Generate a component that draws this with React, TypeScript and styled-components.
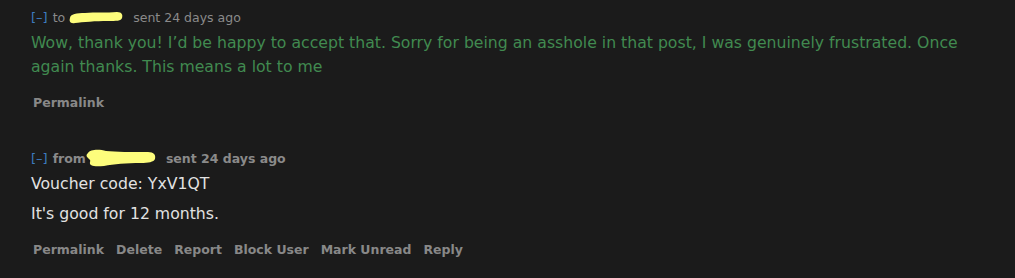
import React from "react";
import styled, { createGlobalStyle } from "styled-components";

const Global = createGlobalStyle`
  html, body { margin: 0; padding: 0; background: #1b1b1b; }
  body { font-family: "DejaVu Sans", Verdana, sans-serif; }
`;

const Page = styled.div`
  width: 1015px;
  height: 278px;
  background: #1b1b1b;
  overflow: hidden;
  padding-top: 7px;
  box-sizing: border-box;
`;

const Message = styled.div<{ $gap?: number }>`
  padding-left: 31px;
  margin-top: ${(p) => p.$gap ?? 0}px;
`;

const Header = styled.div<{ $bold?: boolean }>`
  display: flex;
  align-items: center;
  height: 20px;
  font-size: 12.5px;
  color: #8a8a8a;
  font-weight: ${(p) => (p.$bold ? 700 : 400)};
  white-space: nowrap;
`;

const Toggle = styled.span`
  color: #3d7cc0;
  font-weight: 400;
  font-size: 13px;
  margin-right: 5px;
`;

const Sent = styled.span`
  margin-left: 10px;
`;

const ScribbleBox = styled.span<{ $ml: number }>`
  display: inline-flex;
  margin-left: ${(p) => p.$ml}px;
`;

const Body = styled.div<{ $color: string }>`
  margin-top: 4px;
  font-size: 15.7px;
  line-height: 24px;
  color: ${(p) => p.$color};
  padding-right: 12px;
  & > p { margin: 0; }
  & > p + p { margin-top: 6px; }
`;

const Actions = styled.div`
  display: flex;
  gap: 12px;
  margin-top: 13px;
  padding-left: 2px;
  height: 20px;
  align-items: center;
`;

const Action = styled.a`
  font-size: 12.5px;
  font-weight: 700;
  color: #888888;
  text-decoration: none;
`;

const ScribbleTo = () => (
  <svg width={56} height={14} viewBox="0 0 56 14">
    <path
      d="M3 8 C3 4, 10 3, 18 3 C28 2, 40 3, 50 2 C55 2, 56 5, 55 8 C54 11, 50 11, 40 11 C30 11, 15 12, 8 13 C3 14, 2 11, 3 8 Z"
      fill="#fdfd7c"
    />
  </svg>
);

const ScribbleFrom = () => (
  <svg width={70} height={18} viewBox="0 0 70 18">
    <path
      d="M2 4 C4 0, 14 0, 20 2 C30 3, 45 3, 62 3 C68 3, 70 6, 69 10 C68 13, 62 14, 55 14 C40 14, 28 15, 18 17 C8 18, 3 17, 4 13 C5 11, 3 10, 2 9 C0 7, 0 6, 2 4 Z"
      fill="#fdfd7c"
    />
  </svg>
);

export default function App() {
  return (
    <Page>
      <Global />
      <Message>
        <Header>
          <Toggle>[–]</Toggle>
          <span>to</span>
          <ScribbleBox $ml={2}>
            <ScribbleTo />
          </ScribbleBox>
          <Sent>sent 24 days ago</Sent>
        </Header>
        <Body $color="#418a50">
          <p>
            Wow, thank you! I’d be happy to accept that. Sorry for being an asshole in that post, I was genuinely
            frustrated. Once again thanks. This means a lot to me
          </p>
        </Body>
        <Actions>
          <Action href="#">Permalink</Action>
        </Actions>
      </Message>
      <Message $gap={36}>
        <Header $bold>
          <Toggle>[–]</Toggle>
          <span>from</span>
          <ScribbleBox $ml={0}>
            <ScribbleFrom />
          </ScribbleBox>
          <Sent>sent 24 days ago</Sent>
        </Header>
        <Body $color="#e2e2e2">
          <p>Voucher code: YxV1QT</p>
          <p>It's good for 12 months.</p>
        </Body>
        <Actions>
          <Action href="#">Permalink</Action>
          <Action href="#">Delete</Action>
          <Action href="#">Report</Action>
          <Action href="#">Block User</Action>
          <Action href="#">Mark Unread</Action>
          <Action href="#">Reply</Action>
        </Actions>
      </Message>
    </Page>
  );
}
